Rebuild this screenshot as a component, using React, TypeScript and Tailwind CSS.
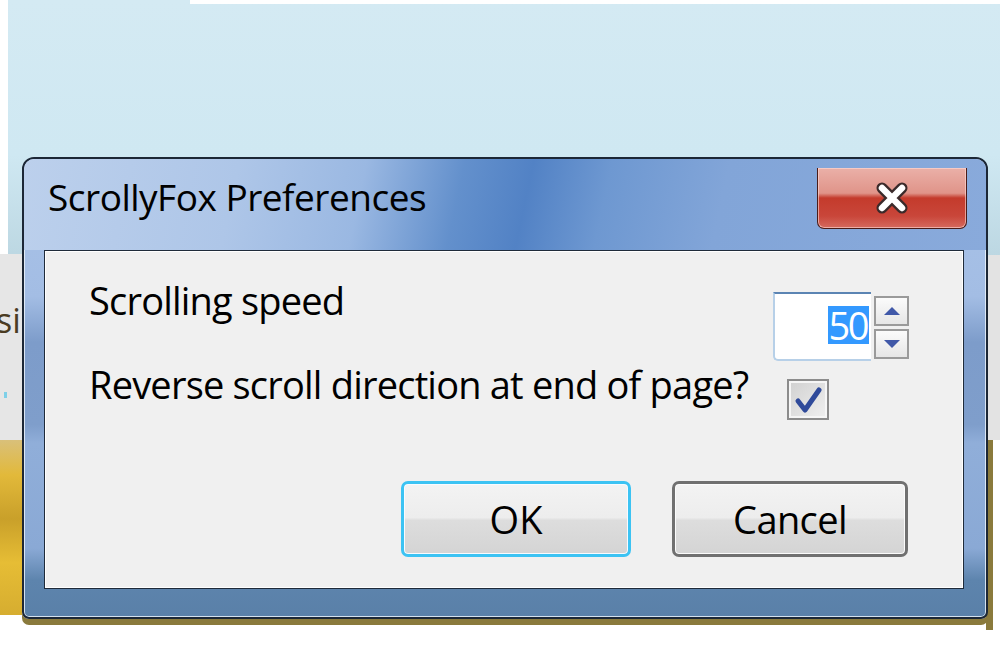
import React from "react";

const font = { fontFamily: '"Open Sans", "Noto Sans", sans-serif' };

function CloseX() {
  return (
    <svg width="40" height="34" viewBox="0 0 40 34">
      <g strokeLinecap="round">
        <path d="M10 7 L30 27 M30 7 L10 27" stroke="#3b2a2a" strokeWidth="11" />
        <path d="M10 7 L30 27 M30 7 L10 27" stroke="#ffffff" strokeWidth="6.5" />
      </g>
    </svg>
  );
}

function Arrow({ up }: { up?: boolean }) {
  return (
    <svg width="18" height="10" viewBox="0 0 18 10">
      {up ? (
        <path d="M1 9 L9 1 L17 9 Z" fill="#4058a8" />
      ) : (
        <path d="M1 1 L9 9 L17 1 Z" fill="#4058a8" />
      )}
    </svg>
  );
}

export default function App() {
  return (
    <div className="relative w-[1000px] h-[645px] overflow-hidden bg-white" style={font}>
      {/* desktop behind the window */}
      <div className="absolute left-[8px] top-0 w-[992px] h-[258px] bg-[linear-gradient(to_bottom,#d4eaf3_0%,#cfe8f2_60%,#bcd7e2_100%)]" />
      <div className="absolute left-[190px] top-0 w-[810px] h-[4px] bg-white" />
      <div className="absolute left-0 top-[254px] w-[22px] h-[186px] bg-[#e6e6e6]" />
      <div className="absolute left-[-4px] top-[300px] text-[34px] leading-[40px] text-[#4a3b22]">si</div>
      <div className="absolute left-[4px] top-[392px] w-[3px] h-[6px] bg-[#7fd0e8]" />
      <div className="absolute left-0 top-[440px] w-[22px] h-[175px] bg-[linear-gradient(to_bottom,#d9c07a_0%,#e2b93a_20%,#c9a02a_45%,#e6bd35_70%,#d6ad30_100%)]" />
      <div className="absolute left-[986px] top-[255px] w-[14px] h-[185px] bg-[#e3e3e3]" />
      <div className="absolute left-[986px] top-[440px] w-[7px] h-[190px] bg-[#8a7a3c]" />

      {/* window */}
      <div className="relative pt-[157px] pl-[22px]">
        <div className="w-[966px] h-[462px] flex flex-col rounded-t-[12px] rounded-b-[7px] border-2 border-[#1c2736] bg-[linear-gradient(to_bottom,#a9c3e8_0%,#a3bde4_30%,#7d9cca_40%,#7f9ecb_58%,#90aed9_62%,#8aa9d5_85%,#5d84ad_92%,#5a80a8_100%)] shadow-[inset_0_0_0_1px_rgba(235,243,252,0.85),0_6px_0_#8a7a3c]">
          {/* title bar */}
          <div className="h-[91px] flex items-start justify-between rounded-t-[10px] bg-[linear-gradient(102deg,#bcd0ec_0%,#aec6e8_22%,#9ab8e2_35%,#6390cc_45%,#5282c5_52%,#6e98d1_60%,#82a5d8_72%,#89aadb_100%)]">
            <div className="pl-[24px] pt-[19px] text-[37px] leading-[37px] text-black tracking-[-0.5px]">
              ScrollyFox Preferences
            </div>
            <div className="mr-[19px] mt-[9px] w-[150px] h-[61px] flex items-center justify-center rounded-b-[7px] border border-t-0 border-[#4a1c18] bg-[linear-gradient(to_bottom,#eab0a8_0%,#e09489_42%,#c43b2c_50%,#c9463a_80%,#d56a5e_100%)] shadow-[inset_0_0_0_1px_rgba(255,220,215,0.6)]">
              <CloseX />
            </div>
          </div>

          {/* client area */}
          <div className="ml-[20px] mr-[22px] h-[339px] border border-[#1f2b3a] bg-[#f0f0f0] shadow-[inset_0_0_0_1px_#ffffff]">
            <div className="pl-[44px] pt-[41px] pr-[54px] text-black">
              <div className="flex items-start h-[69px]">
                <div className="w-[687px] -mt-[11px] text-[38px] leading-[38px] tracking-[-0.8px]">Scrolling speed</div>
                <div className="flex">
                  <div className="w-[98px] h-[69px] rounded-bl-[5px] border-t-2 border-l-2 border-b-2 border-t-[#5b84b3] border-l-[#b7d0e8] border-b-[#b7d0e8] bg-white flex justify-end items-start pt-[12px] pr-[2px]">
                    <span className="bg-[#3399ff] text-white text-[38px] leading-[38px] tracking-[-2.5px] pr-[2px] pl-[1px]">50</span>
                  </div>
                  <div className="ml-[3px] mt-[4px] flex flex-col gap-[3px]">
                    <div className="w-[35px] h-[30px] border-2 border-[#9a9a9a] bg-[linear-gradient(to_bottom,#fbfbfb,#e6e6e6)] flex items-center justify-center">
                      <Arrow up />
                    </div>
                    <div className="w-[35px] h-[30px] border-2 border-[#9a9a9a] bg-[linear-gradient(to_bottom,#fbfbfb,#e6e6e6)] flex items-center justify-center">
                      <Arrow />
                    </div>
                  </div>
                </div>
              </div>
              <div className="flex items-start mt-[18px] h-[40px]">
                <div className="w-[698px] -mt-[14px] text-[38px] leading-[38px] tracking-[-0.8px] whitespace-nowrap">
                  Reverse scroll direction at end of page?
                </div>
                <div className="w-[42px] h-[41px] border-2 border-[#8c8c8c] bg-[#f6f6f6] p-[2px]">
                  <div className="w-full h-full bg-[linear-gradient(135deg,#d2d2d2,#eeeeee)] flex items-center justify-center">
                    <svg width="30" height="28" viewBox="0 0 30 28">
                      <path d="M5 15 L12 24 L26 4" fill="none" stroke="#2f4a9a" strokeWidth="5" strokeLinejoin="round" strokeLinecap="round" />
                    </svg>
                  </div>
                </div>
              </div>
              <div className="flex justify-end gap-[41px] mt-[62px] pr-[1px]">
                <div className="w-[230px] h-[76px] rounded-[7px] border-[3px] border-[#3cc3f3] bg-[linear-gradient(to_bottom,#f3f3f3_0%,#ededed_48%,#dddddd_52%,#d4d4d4_100%)] shadow-[inset_0_0_0_1px_#f8fbff] flex items-center justify-center text-[38px] leading-[38px]">
                  OK
                </div>
                <div className="w-[236px] h-[76px] rounded-[7px] border-[3px] border-[#707070] bg-[linear-gradient(to_bottom,#f3f3f3_0%,#ededed_48%,#dddddd_52%,#d4d4d4_100%)] shadow-[inset_0_0_0_1px_#fbfbfb] flex items-center justify-center text-[38px] leading-[38px] tracking-[-0.6px]">
                  Cancel
                </div>
              </div>
            </div>
          </div>
        </div>
      </div>
    </div>
  );
}
